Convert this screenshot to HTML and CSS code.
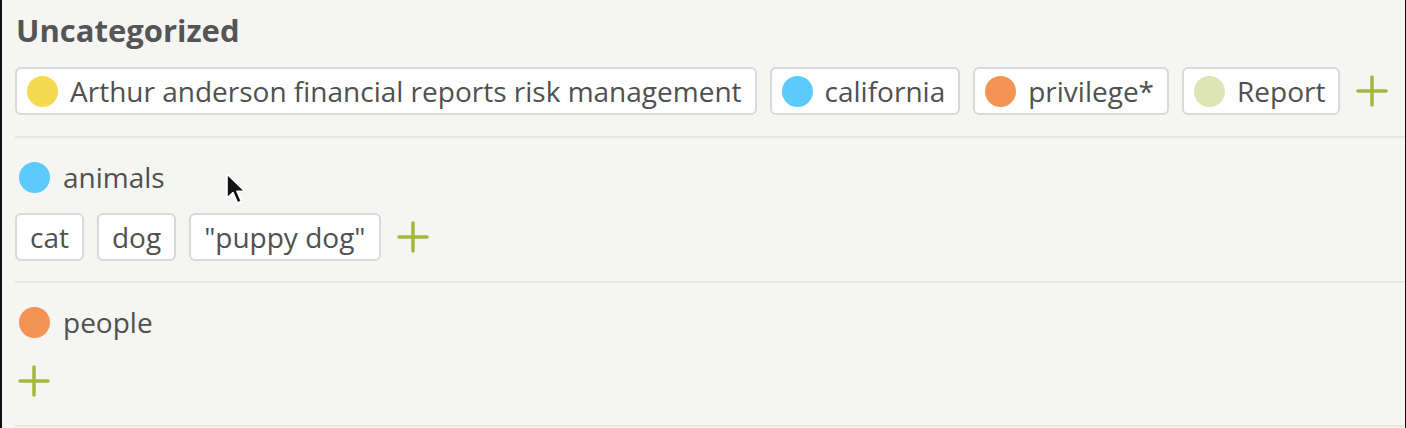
FILE: index.html
```html
<!DOCTYPE html>
<html>
<head>
<meta charset="utf-8">
<link rel="stylesheet" href="styles.css">
</head>
<body>
<div class="panel">
  <section class="group">
    <h2 class="title">Uncategorized</h2>
    <div class="chips">
      <span class="chip"><span class="dot yellow"></span>Arthur anderson financial reports risk management</span>
      <span class="chip"><span class="dot blue"></span>california</span>
      <span class="chip"><span class="dot orange"></span>privilege*</span>
      <span class="chip"><span class="dot lime"></span>Report</span>
      <span class="plus"><svg viewBox="0 0 32 32" width="32" height="32"><path d="M16 2V30M2 16H30" stroke="#a5b83c" stroke-width="3.5" stroke-linecap="round" fill="none"/></svg></span>
    </div>
  </section>
  <section class="group">
    <div class="cat"><span class="dot blue"></span>animals</div>
    <div class="chips">
      <span class="chip plain">cat</span>
      <span class="chip plain">dog</span>
      <span class="chip plain">"puppy dog"</span>
      <span class="plus"><svg viewBox="0 0 32 32" width="32" height="32"><path d="M16 2V30M2 16H30" stroke="#a5b83c" stroke-width="3.5" stroke-linecap="round" fill="none"/></svg></span>
    </div>
  </section>
  <section class="group">
    <div class="cat"><span class="dot orange"></span>people</div>
    <div class="chips">
      <span class="plus"><svg viewBox="0 0 32 32" width="32" height="32"><path d="M16 2V30M2 16H30" stroke="#a5b83c" stroke-width="3.5" stroke-linecap="round" fill="none"/></svg></span>
    </div>
  </section>
  <svg class="cursor" viewBox="0 0 24 34" width="24" height="34"><path d="M2 1L2 25L8 19.5L12.5 30L16.5 28.3L12 18.3L20 18.3Z" fill="#111" stroke="#fff" stroke-width="1.6" stroke-linejoin="round"/></svg>
</div>
</body>
</html>
```
FILE: styles.css
```css
html, body {
  margin: 0;
  padding: 0;
  background: #f5f5f4;
}
body {
  font-family: "Open Sans", "Noto Sans", sans-serif;
  color: #505050;
}
.panel {
  position: relative;
  width: 1406px;
  height: 428px;
  box-sizing: border-box;
  border-left: 2px solid #111;
  border-right: 1px solid #111;
  padding-left: 13px;
  overflow: hidden;
}
.group {
  border-bottom: 2px solid #e6e6e5;
}
.title {
  margin: 0;
  padding: 10px 0 0 1px;
  font-size: 31px;
  font-weight: 700;
  line-height: 40px;
  color: #555;
}
.chips {
  display: flex;
  align-items: center;
  gap: 13px;
  min-height: 48px;
  padding: 19px 0 20px;
}
.group:first-child .chips {
  padding: 17px 0 21px;
}
.group:last-child .chips {
  padding-bottom: 16px;
}
.chip {
  display: inline-flex;
  align-items: center;
  gap: 12px;
  height: 48px;
  box-sizing: border-box;
  padding: 0 13px 0 10px;
  background: #fff;
  border: 2px solid #d9d9d8;
  border-radius: 6px;
  font-size: 28px;
}
.chip.plain {
  padding: 0 13px;
}
.dot {
  display: inline-block;
  width: 31px;
  height: 31px;
  border-radius: 50%;
  flex: none;
}
.yellow { background: #f5d94e; }
.blue { background: #5ccbfc; }
.orange { background: #f39455; }
.lime { background: #dde5b5; }
.plus {
  display: inline-flex;
  margin-left: 3px;
}
.cat {
  display: flex;
  align-items: center;
  gap: 13px;
  padding: 23px 0 0 4px;
  font-size: 28px;
  line-height: 32px;
}
.group:nth-child(2) .chips {
  padding-top: 20px;
}
.cursor {
  position: absolute;
  left: 223px;
  top: 173px;
}
```
